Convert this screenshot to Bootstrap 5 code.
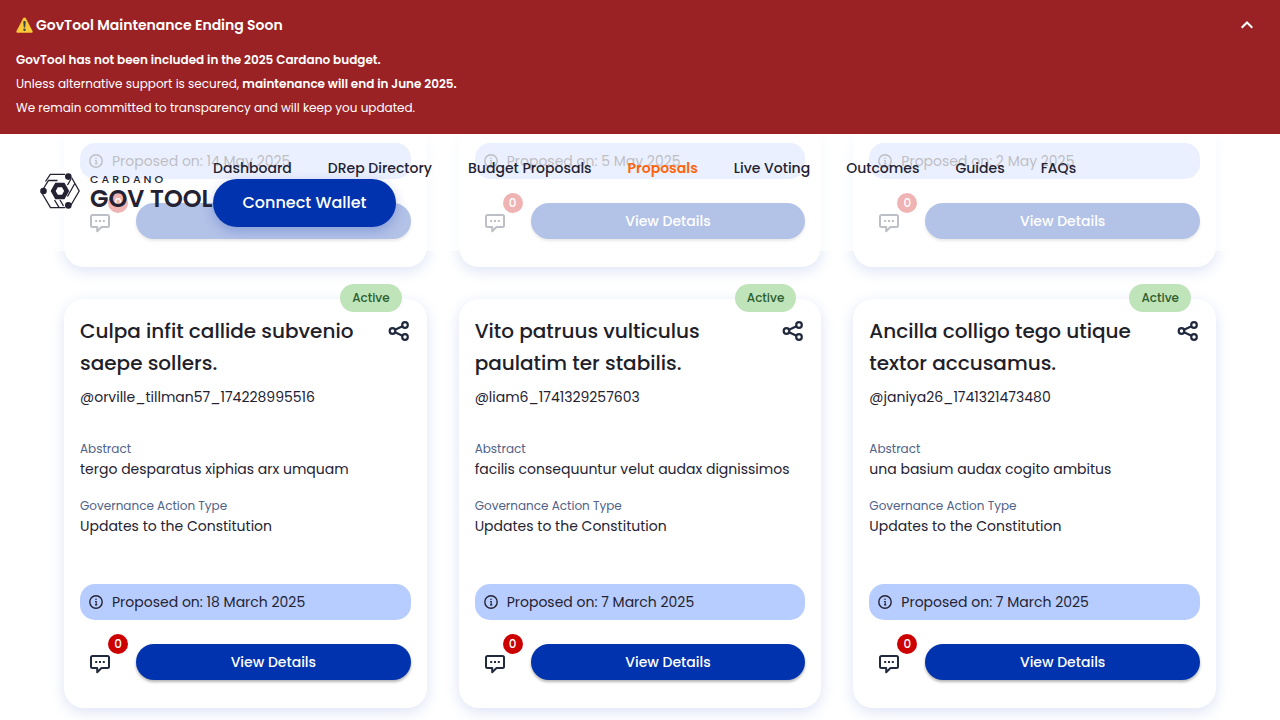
<!DOCTYPE html>
<html lang="en">
<head>
<meta charset="utf-8">
<meta name="viewport" content="width=device-width, initial-scale=1">
<title>Cardano GovTool – Proposals</title>
<link rel="stylesheet" href="https://cdn.jsdelivr.net/npm/bootstrap@5.3.0/dist/css/bootstrap.min.css">
<style>
:root { --gt-blue: #0033ad; --gt-ink: #242232; }
body { font-family: Poppins, Inter, sans-serif; font-size: 14px; line-height: 20px; color: var(--gt-ink); background: #fff; }
svg { display: block; flex: none; }

/* maintenance notice */
.notice { background: #9b2224; color: #fff; padding: 13px 16px 14px; z-index: 20; font-size: 12px; line-height: 24px; }
.notice h1 { font-size: 14px; line-height: 24px; font-weight: 600; gap: 3px; margin: 0 0 11px; }
.notice strong { font-weight: 600; }
.notice-toggle { width: 34px; height: 24px; }

/* translucent header lying over the list */
.topbar { background: rgba(255, 255, 255, .7); padding: 23px 40px 24px; z-index: 10; }
.brand { width: 173px; gap: 10px; color: var(--gt-ink); white-space: nowrap; }
.brand-top { font-size: 11px; line-height: 13px; font-weight: 500; letter-spacing: 3px; }
.brand-main { font-size: 24px; line-height: 26px; font-weight: 600; }
.menu { column-gap: 36px; line-height: 22px; }
.menu a { color: var(--gt-ink); font-weight: 500; }
.menu a.active { color: #ff640a; font-weight: 600; }
.btn-gt { --bs-btn-color: #fff; --bs-btn-bg: var(--gt-blue); --bs-btn-hover-color: #fff; --bs-btn-hover-bg: #002682; --bs-btn-border-width: 0; --bs-btn-font-weight: 500; --bs-btn-padding-y: 0; }
.btn-wallet { --bs-btn-font-size: 16px; height: 48px; min-width: 183px; box-shadow: 0 4px 12px rgba(0, 51, 173, .25); }

/* proposal cards */
.list { padding: 0 64px 12px; }
.list > .row { --bs-gutter-x: 32px; }
.proposal { border-radius: 20px; padding: 16px 16px 28px; background: #fff; box-shadow: 0 4px 15px #dde3f5; }
.proposal-cut { border-radius: 0 0 20px 20px; padding-top: 9px; margin-bottom: 32px; }
.status { top: -15px; right: 25px; padding: 0 12px; border-radius: 14px; background: #c0e4ba; color: #2c5e2e; font-size: 12px; line-height: 28px; font-weight: 500; }
.proposal h2 { font-size: 20px; line-height: 32px; font-weight: 500; margin: 0; color: #212029; }
.author { margin: 8px 0 32px; }
.proposal dl { margin: 0 0 48px; }
.proposal dt { font-size: 12px; line-height: 20px; font-weight: 400; color: #506288; }
.proposal dd { margin: 0 0 17px; }
.proposal dd:last-child { margin: 0; }
.proposed { height: 36px; padding: 0 8px; gap: 8px; border-radius: 15px; background: #b8cdff; margin-bottom: 24px; }
.talk, .share { color: #212a3d; }
.talk { width: 40px; height: 36px; }
.tally { top: -10px; right: -8px; width: 20px; height: 20px; background: #cc0000; color: #fff; font-size: 12px; line-height: 20px; font-weight: 500; }
.btn-view { --bs-btn-font-size: 14px; height: 36px; box-shadow: 0 2px 3px rgba(0, 0, 0, .3); }
</style>
</head>
<body>
<svg class="d-none" xmlns="http://www.w3.org/2000/svg">
  <symbol id="i-info" viewBox="0 0 16 16"><circle cx="8" cy="8" r="6.2" fill="none" stroke="currentColor" stroke-width="1.4"/><path d="M7 7.500h1.200v3.400M7 10.900h2.300" fill="none" stroke="currentColor" stroke-width="1.100"/><circle cx="8" cy="5.300" r=".8" fill="currentColor"/></symbol>
  <symbol id="i-talk" viewBox="0 0 24 24"><path d="M4.500 6h15A1.500 1.500 0 0 1 21 7.500v9a1.500 1.500 0 0 1-1.500 1.500H13.500L9.200 22.300V18H4.500A1.500 1.500 0 0 1 3 16.500v-9A1.500 1.500 0 0 1 4.500 6Z" fill="none" stroke="currentColor" stroke-width="2" stroke-linejoin="round"/><path d="M7.200 11h2v2h-2zm3.800 0h2v2h-2zm3.800 0h2v2h-2z" fill="currentColor"/></symbol>
  <symbol id="i-share" viewBox="0 0 24 24"><g fill="none" stroke="currentColor" stroke-width="2.200"><circle cx="5.500" cy="12" r="2.800"/><circle cx="18" cy="6" r="2.800"/><circle cx="18" cy="18" r="2.800"/><path d="m8 10.800 7.500-3.600M8 13.200l7.500 3.600"/></g></symbol>
</svg>

<section class="notice position-relative">
  <div class="d-flex justify-content-between">
    <h1 class="d-flex align-items-center">
      <svg width="17" height="16" viewBox="0 0 17 16" aria-hidden="true"><path d="M8.500.500c.600 0 1 .300 1.300.800l6.700 12.600c.500 1-.100 1.900-1.200 1.900H1.700c-1.100 0-1.700-.900-1.200-1.900L7.200 1.300C7.500.800 7.900.500 8.500.500Z" fill="#fcc837"/><path d="M7.300 5.200c0-.8.500-1.100 1.200-1.100s1.200.3 1.200 1.100L9.200 10.500H7.800Z" fill="#36464e"/><circle cx="8.500" cy="12.700" r="1.200" fill="#36464e"/></svg>
      GovTool Maintenance Ending Soon
    </h1>
    <button class="notice-toggle btn border-0 p-0 text-white d-flex align-items-center justify-content-center" type="button" aria-label="Collapse notice">
      <svg width="14" height="10" viewBox="0 0 14 10"><path d="m1.700 7.700 5.300-5.200 5.300 5.200" fill="none" stroke="currentColor" stroke-width="2"/></svg>
    </button>
  </div>
  <div><strong>GovTool has not been included in the 2025 Cardano budget.</strong></div>
  <div>Unless alternative support is secured, <strong>maintenance will end in June 2025.</strong></div>
  <div>We remain committed to transparency and will keep you updated.</div>
</section>

<div class="position-relative">
  <header class="topbar position-absolute top-0 start-0 w-100 d-flex align-items-center">
    <a class="brand d-flex align-items-start text-decoration-none flex-shrink-0" href="#">
      <svg width="40" height="36" viewBox="0 0 40 36" aria-hidden="true">
        <g fill="none" stroke="#242232" stroke-width="1.300">
          <path d="M5.500 8.500 10.300 1.300H25M31.500 4.500 39.200 18 31 32M25 34.700H10.500L2.200 20.500"/>
          <path d="M3.500 15.500 8.500 7.500h9M31 6 27.500 12M34.800 10.500 27.500 23.500M14.500 27l4.700 7.700M20 27l3.500 6"/>
        </g>
        <path d="M15.300 9.700h9.200l4.700 8.300-4.700 8.300h-9.200L10.600 18Z" fill="#242232"/>
        <path d="M17.800 14.300h4.200l2.100 3.700-2.100 3.700h-4.200L15.700 18Z" fill="#fff"/>
        <g fill="#242232"><circle cx="28.300" cy="3.600" r="3.300"/><circle cx="3.500" cy="18" r="3.300"/><circle cx="28.300" cy="32.400" r="3.300"/></g>
      </svg>
      <span class="d-flex flex-column"><span class="brand-top">CARDANO</span><span class="brand-main">GOV TOOL</span></span>
    </a>
    <div>
      <nav class="menu d-flex flex-wrap" aria-label="Main">
        <a class="text-decoration-none" href="#">Dashboard</a>
        <a class="text-decoration-none" href="#">DRep Directory</a>
        <a class="text-decoration-none" href="#">Budget Proposals</a>
        <a class="text-decoration-none active" href="#" aria-current="page">Proposals</a>
        <a class="text-decoration-none" href="#">Live Voting</a>
        <a class="text-decoration-none" href="#">Outcomes</a>
        <a class="text-decoration-none" href="#">Guides</a>
        <a class="text-decoration-none" href="#">FAQs</a>
      </nav>
      <button class="btn btn-gt btn-wallet rounded-pill" type="button">Connect Wallet</button>
    </div>
  </header>

  <main class="list container-fluid">
    <div class="row">
      <div class="col-4">
        <article class="proposal proposal-cut">
          <div class="proposed d-flex align-items-center"><svg width="16" height="16"><use href="#i-info"/></svg>Proposed on: 14 May 2025</div>
          <div class="d-flex gap-3">
            <button class="talk btn border-0 p-0 position-relative d-flex align-items-center justify-content-center" type="button" aria-label="Comments"><svg width="24" height="24"><use href="#i-talk"/></svg><span class="tally position-absolute rounded-circle">0</span></button>
            <button class="btn btn-gt btn-view rounded-pill flex-fill" type="button">View Details</button>
          </div>
        </article>
      </div>
      <div class="col-4">
        <article class="proposal proposal-cut">
          <div class="proposed d-flex align-items-center"><svg width="16" height="16"><use href="#i-info"/></svg>Proposed on: 5 May 2025</div>
          <div class="d-flex gap-3">
            <button class="talk btn border-0 p-0 position-relative d-flex align-items-center justify-content-center" type="button" aria-label="Comments"><svg width="24" height="24"><use href="#i-talk"/></svg><span class="tally position-absolute rounded-circle">0</span></button>
            <button class="btn btn-gt btn-view rounded-pill flex-fill" type="button">View Details</button>
          </div>
        </article>
      </div>
      <div class="col-4">
        <article class="proposal proposal-cut">
          <div class="proposed d-flex align-items-center"><svg width="16" height="16"><use href="#i-info"/></svg>Proposed on: 2 May 2025</div>
          <div class="d-flex gap-3">
            <button class="talk btn border-0 p-0 position-relative d-flex align-items-center justify-content-center" type="button" aria-label="Comments"><svg width="24" height="24"><use href="#i-talk"/></svg><span class="tally position-absolute rounded-circle">0</span></button>
            <button class="btn btn-gt btn-view rounded-pill flex-fill" type="button">View Details</button>
          </div>
        </article>
      </div>

      <div class="col-4">
        <article class="proposal position-relative">
          <span class="status position-absolute">Active</span>
          <div class="d-flex justify-content-between align-items-start">
            <h2>Culpa infit callide subvenio<br>saepe sollers.</h2>
            <button class="share btn border-0 p-0 mt-1" type="button" aria-label="Share"><svg width="24" height="24"><use href="#i-share"/></svg></button>
          </div>
          <p class="author">@orville_tillman57_174228995516</p>
          <dl>
            <dt>Abstract</dt><dd>tergo desparatus xiphias arx umquam</dd>
            <dt>Governance Action Type</dt><dd>Updates to the Constitution</dd>
          </dl>
          <div class="proposed d-flex align-items-center"><svg width="16" height="16"><use href="#i-info"/></svg>Proposed on: 18 March 2025</div>
          <div class="d-flex gap-3">
            <button class="talk btn border-0 p-0 position-relative d-flex align-items-center justify-content-center" type="button" aria-label="Comments"><svg width="24" height="24"><use href="#i-talk"/></svg><span class="tally position-absolute rounded-circle">0</span></button>
            <button class="btn btn-gt btn-view rounded-pill flex-fill" type="button">View Details</button>
          </div>
        </article>
      </div>
      <div class="col-4">
        <article class="proposal position-relative">
          <span class="status position-absolute">Active</span>
          <div class="d-flex justify-content-between align-items-start">
            <h2>Vito patruus vulticulus<br>paulatim ter stabilis.</h2>
            <button class="share btn border-0 p-0 mt-1" type="button" aria-label="Share"><svg width="24" height="24"><use href="#i-share"/></svg></button>
          </div>
          <p class="author">@liam6_1741329257603</p>
          <dl>
            <dt>Abstract</dt><dd>facilis consequuntur velut audax dignissimos</dd>
            <dt>Governance Action Type</dt><dd>Updates to the Constitution</dd>
          </dl>
          <div class="proposed d-flex align-items-center"><svg width="16" height="16"><use href="#i-info"/></svg>Proposed on: 7 March 2025</div>
          <div class="d-flex gap-3">
            <button class="talk btn border-0 p-0 position-relative d-flex align-items-center justify-content-center" type="button" aria-label="Comments"><svg width="24" height="24"><use href="#i-talk"/></svg><span class="tally position-absolute rounded-circle">0</span></button>
            <button class="btn btn-gt btn-view rounded-pill flex-fill" type="button">View Details</button>
          </div>
        </article>
      </div>
      <div class="col-4">
        <article class="proposal position-relative">
          <span class="status position-absolute">Active</span>
          <div class="d-flex justify-content-between align-items-start">
            <h2>Ancilla colligo tego utique<br>textor accusamus.</h2>
            <button class="share btn border-0 p-0 mt-1" type="button" aria-label="Share"><svg width="24" height="24"><use href="#i-share"/></svg></button>
          </div>
          <p class="author">@janiya26_1741321473480</p>
          <dl>
            <dt>Abstract</dt><dd>una basium audax cogito ambitus</dd>
            <dt>Governance Action Type</dt><dd>Updates to the Constitution</dd>
          </dl>
          <div class="proposed d-flex align-items-center"><svg width="16" height="16"><use href="#i-info"/></svg>Proposed on: 7 March 2025</div>
          <div class="d-flex gap-3">
            <button class="talk btn border-0 p-0 position-relative d-flex align-items-center justify-content-center" type="button" aria-label="Comments"><svg width="24" height="24"><use href="#i-talk"/></svg><span class="tally position-absolute rounded-circle">0</span></button>
            <button class="btn btn-gt btn-view rounded-pill flex-fill" type="button">View Details</button>
          </div>
        </article>
      </div>
    </div>
  </main>
</div>
<script src="https://cdn.jsdelivr.net/npm/bootstrap@5.3.0/dist/js/bootstrap.bundle.min.js"></script>
</body>
</html>
